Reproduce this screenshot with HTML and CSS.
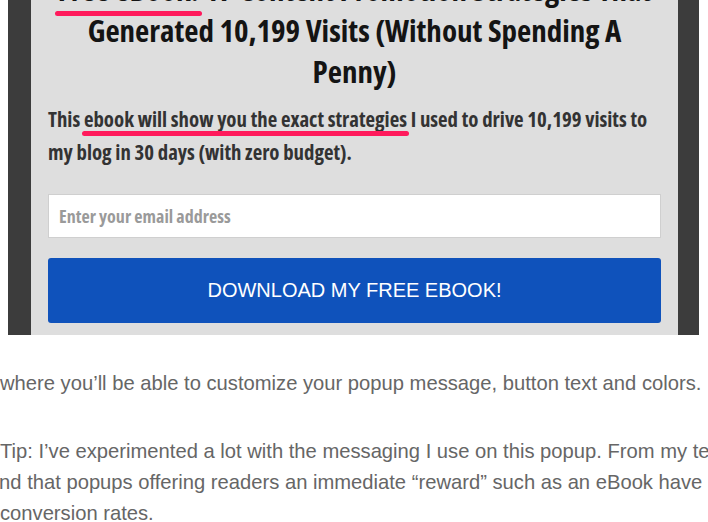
FILE: index.html
```html
<!DOCTYPE html>
<html>
<head>
<meta charset="utf-8">
<link rel="stylesheet" href="styles.css">
</head>
<body>
<div class="shot">
  <div class="panel">
    <h1 class="title"><span class="mark">Free eBook:</span> 17 Content Promotion Strategies That Generated 10,199 Visits (Without Spending A Penny)</h1>
    <p class="lead">This <span class="mark mark-lead">ebook will show you the exact strategies</span> I used to drive 10,199 visits to my blog in 30 days (with zero budget).</p>
    <input class="email" type="text" placeholder="Enter your email address">
    <button class="cta">DOWNLOAD MY FREE EBOOK!</button>
  </div>
</div>
<div class="article">
  <p class="line">where you’ll be able to customize your popup message, button text and colors.</p>
  <p class="tip"><span class="line">Tip: I’ve experimented a lot with the messaging I use on this popup. From my tests, I’ve</span><span class="line shift">find that popups offering readers an immediate “reward” such as an eBook have higher</span><span class="line">conversion rates.</span></p>
</div>
</body>
</html>
```
FILE: styles.css
```css
html, body {
  margin: 0;
  padding: 0;
  background: #fff;
  overflow: hidden;
}
body {
  width: 708px;
  height: 522px;
}
.shot {
  margin: -31px 9px 0 8px;
  background: #3c3c3c;
  padding: 0 21px 0 23px;
}
.panel {
  background: #dedede;
  padding: 0 17px 12px 17px;
  display: flex;
  flex-direction: column;
}
.title {
  margin: 0;
  font-family: "Open Sans", sans-serif;
  font-stretch: 75%;
  font-weight: 700;
  font-size: 31px;
  line-height: 41px;
  text-align: center;
  color: #141414;
  padding: 0;
}
.mark {
  position: relative;
}
.mark::after {
  content: "";
  position: absolute;
  left: -3px;
  right: -3px;
  bottom: -6px;
  height: 5px;
  border-radius: 3px;
  background: #ff1a5c;
}
.mark-lead::after {
  left: -2px;
  right: -2px;
  bottom: -3px;
  height: 5px;
}
.lead {
  margin: 11px 0 0 0;
  font-family: "Open Sans", sans-serif;
  font-stretch: 75%;
  font-weight: 700;
  font-size: 20.8px;
  line-height: 33px;
  color: #333;
}
.email {
  margin-top: 25px;
  height: 44px;
  box-sizing: border-box;
  border: 1px solid #cfcfcf;
  background: #fff;
  padding: 0 10px;
  font-family: "Open Sans", sans-serif;
  font-stretch: 75%;
  font-weight: 700;
  font-size: 18px;
  color: #333;
}
.email::placeholder {
  color: #9a9a9a;
}
.cta {
  margin-top: 20px;
  height: 65px;
  border: none;
  border-radius: 3px;
  background: #0f52bb;
  color: #fff;
  font-family: "Liberation Sans", Arial, sans-serif;
  font-size: 20px;
  padding: 0;
}
.article {
  margin-top: 33px;
  font-family: "Liberation Sans", Arial, sans-serif;
  font-size: 20.2px;
  line-height: 31px;
  color: #666;
  white-space: nowrap;
}
.article p {
  margin: 0;
}
.tip {
  margin-top: 37px !important;
}
.line {
  display: block;
}
.shift {
  text-indent: -11px;
}
```
